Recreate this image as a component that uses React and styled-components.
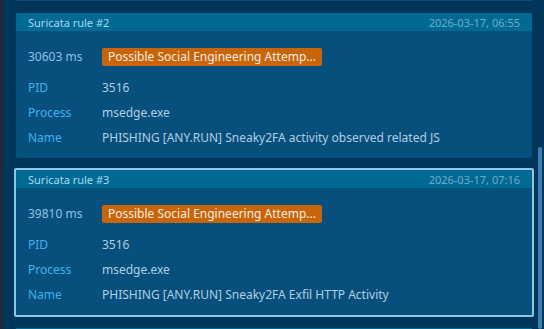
import React from "react";
import styled, { createGlobalStyle } from "styled-components";

const GlobalStyle = createGlobalStyle`
  html, body {
    margin: 0;
    padding: 0;
    background: #02355a;
    font-family: "Noto Sans", "Open Sans", sans-serif;
  }
`;

const rules = [
  {
    id: 2,
    time: "2026-03-17, 06:55",
    ms: "30603 ms",
    name: "PHISHING [ANY.RUN] Sneaky2FA activity observed related JS",
  },
  {
    id: 3,
    time: "2026-03-17, 07:16",
    ms: "39810 ms",
    name: "PHISHING [ANY.RUN] Sneaky2FA Exfil HTTP Activity",
    selected: true,
  },
];

// cut long category names the way the list does
const shorten = (text, max = 34) =>
  text.length > max ? text.slice(0, max) + "..." : text;

function App() {
  return (
    <>
      <GlobalStyle />
      <Frame>
        <Edge />
        <Viewport>
          <List>
            <CardStub $part="bottom" />
            {rules.map((rule) => (
              <Card key={rule.id} $selected={rule.selected}>
                <Header>
                  <span>Suricata rule #{rule.id}</span>
                  <Time>{rule.time}</Time>
                </Header>
                <Body>
                  <Row $first>
                    <Duration>{rule.ms}</Duration>
                    <Badge>{shorten("Possible Social Engineering Attempted")}</Badge>
                  </Row>
                  <Row>
                    <Label>PID</Label>
                    <Value>3516</Value>
                  </Row>
                  <Row>
                    <Label>Process</Label>
                    <Value>msedge.exe</Value>
                  </Row>
                  <Row>
                    <Label>Name</Label>
                    <Value>{rule.name}</Value>
                  </Row>
                </Body>
              </Card>
            ))}
            <CardStub $part="top" />
          </List>
        </Viewport>
        <Scrollbar>
          <Thumb />
        </Scrollbar>
      </Frame>
    </>
  );
}

const Frame = styled.div`
  display: flex;
  width: 544px;
  height: 329px;
  overflow: hidden;
  background: #02355a;
`;

const Edge = styled.div`
  width: 3px;
  flex-shrink: 0;
  background: #1f2a34;
`;

const Viewport = styled.div`
  flex: 1;
  overflow: hidden;
`;

const List = styled.div`
  display: flex;
  flex-direction: column;
  gap: 12px;
  padding: 0 5px 0 13px;
`;

const CardStub = styled.div`
  height: ${(p) => (p.$part === "bottom" ? "1px" : "4px")};
  background: ${(p) => (p.$part === "bottom" ? "#07507e" : "#016a93")};
  margin-top: ${(p) => (p.$part === "top" ? "-1px" : "0")};
`;

const Card = styled.div`
  background: #07507e;
  border-radius: 2px;
  overflow: hidden;
  ${(p) =>
    p.$selected &&
    `
    border: 2px solid #8dc6ea;
    margin: -2px -2px 0;
  `}
`;

const Header = styled.div`
  display: flex;
  justify-content: space-between;
  align-items: center;
  height: 18px;
  padding: 0 12px;
  background: #016a93;
  color: #a8d8f0;
  font-size: 11px;
`;

const Time = styled.span`
  color: #70abcb;
`;

const Body = styled.div`
  padding: 13px 12px 8px;
`;

const Row = styled.div`
  display: flex;
  align-items: center;
  height: 25px;
  margin-bottom: ${(p) => (p.$first ? "6px" : "0")};
  font-size: 12px;
`;

const Duration = styled.span`
  width: 74px;
  flex-shrink: 0;
  color: #8cc3e4;
`;

const Label = styled.span`
  width: 74px;
  flex-shrink: 0;
  color: #3fb0ee;
`;

const Value = styled.span`
  color: #b2cde0;
  white-space: nowrap;
`;

const Badge = styled.span`
  box-sizing: border-box;
  height: 18px;
  line-height: 18px;
  padding: 0 6px;
  border-radius: 2px;
  background: #c8650a;
  color: #f6ebe0;
  font-size: 12px;
  white-space: nowrap;
`;

const Scrollbar = styled.div`
  width: 7px;
  flex-shrink: 0;
  position: relative;
  background: #02355a;
`;

const Thumb = styled.div`
  position: absolute;
  left: 1px;
  top: 147px;
  width: 4px;
  bottom: 0;
  border-radius: 2px;
  background: #3c7fb5;
`;

export default App;
